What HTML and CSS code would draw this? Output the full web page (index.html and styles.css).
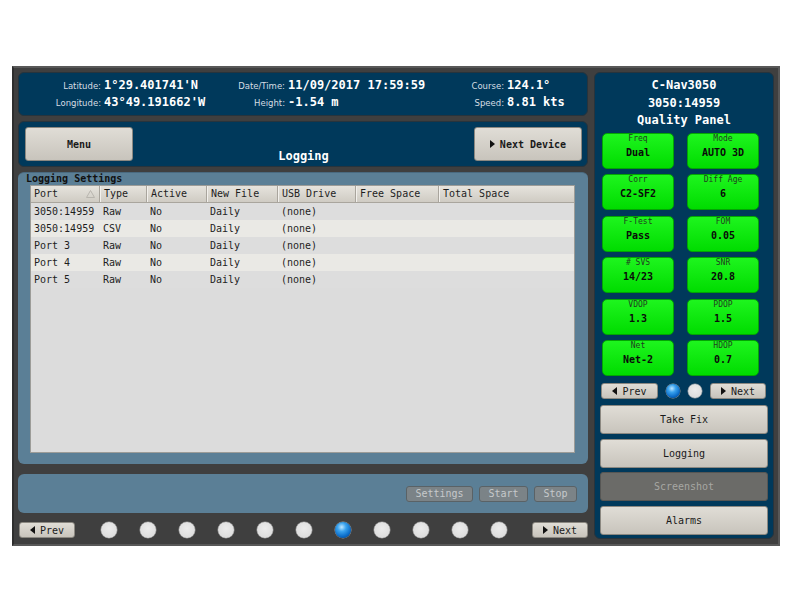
FILE: index.html
```html
<!DOCTYPE html>
<html>
<head>
<meta charset="utf-8">
<link rel="stylesheet" href="styles.css">
</head>
<body>
<div class="frame">
  <div class="left">
    <div class="panel header">
      <div class="hgrid">
        <span class="lbl">Latitude:</span><span class="val">1°29.401741'N</span>
        <span class="lbl">Date/Time:</span><span class="val">11/09/2017 17:59:59</span>
        <span class="lbl">Course:</span><span class="val">124.1°</span>
        <span class="lbl">Longitude:</span><span class="val">43°49.191662'W</span>
        <span class="lbl">Height:</span><span class="val">-1.54 m</span>
        <span class="lbl">Speed:</span><span class="val">8.81 kts</span>
      </div>
    </div>
    <div class="panel titlebar">
      <div class="btn big bold">Menu</div>
      <div class="title">Logging</div>
      <div class="btn big bold"><span class="tri-r"></span>Next Device</div>
    </div>
    <div class="group">
      <div class="legend">Logging Settings</div>
      <div class="table">
        <div class="row head">
          <div class="cell c1">Port<svg class="sort" width="9" height="8" viewBox="0 0 9 8"><path d="M4.5 0.5 L8.5 7.5 L0.5 7.5 Z" fill="none" stroke="#b8b5ae" stroke-width="1"/></svg></div>
          <div class="cell c2">Type</div>
          <div class="cell c3">Active</div>
          <div class="cell c4">New File</div>
          <div class="cell c5">USB Drive</div>
          <div class="cell c6">Free Space</div>
          <div class="cell c7">Total Space</div>
        </div>
        <div class="row odd"><div class="cell c1">3050:14959</div><div class="cell c2">Raw</div><div class="cell c3">No</div><div class="cell c4">Daily</div><div class="cell c5">(none)</div><div class="cell c6"></div><div class="cell c7"></div></div>
        <div class="row even"><div class="cell c1">3050:14959</div><div class="cell c2">CSV</div><div class="cell c3">No</div><div class="cell c4">Daily</div><div class="cell c5">(none)</div><div class="cell c6"></div><div class="cell c7"></div></div>
        <div class="row odd"><div class="cell c1">Port 3</div><div class="cell c2">Raw</div><div class="cell c3">No</div><div class="cell c4">Daily</div><div class="cell c5">(none)</div><div class="cell c6"></div><div class="cell c7"></div></div>
        <div class="row even"><div class="cell c1">Port 4</div><div class="cell c2">Raw</div><div class="cell c3">No</div><div class="cell c4">Daily</div><div class="cell c5">(none)</div><div class="cell c6"></div><div class="cell c7"></div></div>
        <div class="row odd"><div class="cell c1">Port 5</div><div class="cell c2">Raw</div><div class="cell c3">No</div><div class="cell c4">Daily</div><div class="cell c5">(none)</div><div class="cell c6"></div><div class="cell c7"></div></div>
      </div>
    </div>
    <div class="actions">
      <div class="dbtn w-settings">Settings</div>
      <div class="dbtn w-start">Start</div>
      <div class="dbtn w-stop">Stop</div>
    </div>
    <div class="nav">
      <div class="btn small prev"><span class="tri-l"></span>Prev</div>
      <div class="dots">
        <span class="dot"></span><span class="dot"></span><span class="dot"></span><span class="dot"></span><span class="dot"></span><span class="dot"></span>
        <span class="dot on"></span>
        <span class="dot"></span><span class="dot"></span><span class="dot"></span><span class="dot"></span>
      </div>
      <div class="btn small next"><span class="tri-r"></span>Next</div>
    </div>
  </div>
  <div class="side">
    <div class="stitle">C-Nav3050<br>3050:14959<br>Quality Panel</div>
    <div class="tiles">
      <div class="tile"><div class="tl">Freq</div><div class="tv">Dual</div></div>
      <div class="tile"><div class="tl">Mode</div><div class="tv">AUTO 3D</div></div>
      <div class="tile"><div class="tl">Corr</div><div class="tv">C2-SF2</div></div>
      <div class="tile"><div class="tl">Diff Age</div><div class="tv">6</div></div>
      <div class="tile"><div class="tl">F-Test</div><div class="tv">Pass</div></div>
      <div class="tile"><div class="tl">FOM</div><div class="tv">0.05</div></div>
      <div class="tile"><div class="tl"># SVS</div><div class="tv">14/23</div></div>
      <div class="tile"><div class="tl">SNR</div><div class="tv">20.8</div></div>
      <div class="tile"><div class="tl">VDOP</div><div class="tv">1.3</div></div>
      <div class="tile"><div class="tl">PDOP</div><div class="tv">1.5</div></div>
      <div class="tile"><div class="tl">Net</div><div class="tv">Net-2</div></div>
      <div class="tile"><div class="tl">HDOP</div><div class="tv">0.7</div></div>
    </div>
    <div class="snav">
      <div class="btn small sprev"><span class="tri-l"></span>Prev</div>
      <span class="dot sd on"></span>
      <span class="dot sd"></span>
      <div class="btn small snext"><span class="tri-r"></span>Next</div>
    </div>
    <div class="sbtns">
      <div class="btn wide">Take Fix</div>
      <div class="btn wide">Logging</div>
      <div class="btn wide disabled">Screenshot</div>
      <div class="btn wide">Alarms</div>
    </div>
  </div>
</div>
</body>
</html>
```

FILE: styles.css
```css
* { box-sizing: border-box; }
body {
  margin: 0;
  background: #ffffff;
  font-family: "DejaVu Sans Mono", "Liberation Mono", monospace;
}
.frame {
  margin: 66px 0 0 12px;
  width: 768px;
  height: 480px;
  background: #3f3f3f;
  border: 2px solid #585858;
  border-left-color: #2e2e2e;
  padding: 4px 4px 5px 4px;
  display: flex;
  gap: 6px;
  align-items: flex-start;
}
.left {
  width: 570px;
  display: flex;
  flex-direction: column;
}
.panel {
  background: #00395b;
  border: 1px solid #27343d;
  border-radius: 6px;
}
.header {
  height: 44px;
  padding-top: 4px;
}
.hgrid {
  display: grid;
  grid-template-columns: 85px 132px 52px 170px 49px 80px;
  grid-auto-rows: 17px;
  align-items: baseline;
}
.lbl {
  font-family: "DejaVu Sans", sans-serif;
  font-size: 8.5px;
  color: #d6dde3;
  text-align: right;
  padding-right: 3px;
}
.val {
  font-weight: bold;
  font-size: 12px;
  color: #ffffff;
  white-space: nowrap;
  line-height: 17px;
}
.titlebar {
  margin-top: 5px;
  height: 46px;
  padding: 5px 5px 0 6px;
  display: flex;
  justify-content: space-between;
  align-items: flex-start;
}
.title {
  align-self: flex-end;
  color: #fff;
  font-weight: bold;
  font-size: 12px;
  line-height: 14px;
  margin-bottom: 3px;
}
.btn {
  background: linear-gradient(#e0ddd6, #c8c4bc);
  border: 1px solid #8b8881;
  border-radius: 3px;
  color: #1a1a1a;
  font-size: 10px;
  display: flex;
  align-items: center;
  justify-content: center;
}
.bold { font-weight: bold; }
.big { width: 108px; height: 34px; }
.tri-r, .tri-l {
  display: inline-block;
  width: 0; height: 0;
  border-top: 4.5px solid transparent;
  border-bottom: 4.5px solid transparent;
  margin-right: 5px;
}
.tri-r { border-left: 5px solid #111; }
.tri-l { border-right: 5px solid #111; }
.group {
  margin-top: 5px;
  height: 292px;
  background: #5b7f96;
  border-radius: 6px;
  border-top: 1px solid #4a6a80;
  padding: 0 11px 0 12px;
}
.legend {
  font-weight: bold;
  font-size: 10px;
  line-height: 12px;
  color: #111;
  margin-left: -4px;
}
.table {
  background: #dcdcdc;
  border: 1px solid #9c9c98;
  height: 268px;
  width: 545px;
}
.row {
  display: flex;
  height: 17px;
  line-height: 17px;
  font-size: 10px;
  color: #1e1e1e;
}
.row.head {
  background: linear-gradient(#e6e3dd, #cfcbc3);
  border-bottom: 1px solid #a9a59d;
  height: 17px;
  line-height: 15px;
}
.row.odd { background: #dddddd; }
.row.even { background: #eae9e5; }
.cell {
  padding-left: 3px;
  white-space: nowrap;
  overflow: hidden;
  position: relative;
}
.head .cell {
  border-right: 1px solid #a9a59d;
  border-left: 1px solid #f2f0ec;
}
.head .cell.c1 { border-left: none; }
.head .cell.c7 { border-right: none; }
.c1 { width: 69px; }
.c2 { width: 47px; }
.c3 { width: 60px; }
.c4 { width: 71px; }
.c5 { width: 78px; }
.c6 { width: 83px; }
.c7 { flex: 1; }
.sort {
  position: absolute;
  right: 4px;
  top: 4px;
}
.actions {
  margin-top: 10px;
  height: 39px;
  background: #5b7f96;
  border-radius: 6px;
  display: flex;
  justify-content: flex-end;
  align-items: flex-start;
  gap: 6px;
  padding: 12px 11px 0 0;
}
.dbtn {
  height: 16px;
  background: #7b8387;
  border: 1px solid #5a6266;
  border-radius: 3px;
  color: #c6c9cb;
  font-size: 10px;
  line-height: 14px;
  text-align: center;
}
.w-settings { width: 67px; }
.w-start { width: 49px; }
.w-stop { width: 43px; }
.nav {
  margin-top: 9px;
  height: 16px;
  display: flex;
  align-items: center;
}
.small { height: 16px; width: 56px; }
.prev { margin-left: 1px; }
.dots {
  flex: 1;
  display: flex;
  justify-content: center;
  gap: 23px;
}
.dot {
  width: 16px;
  height: 16px;
  border-radius: 50%;
  background: radial-gradient(circle at 50% 40%, #ececec, #d8d8d8);
  box-shadow: 0 0 0 0.5px #9a9a9a;
  display: inline-block;
}
.dot.on {
  background: radial-gradient(circle at 42% 32%, #bfe6ff 0, #3aa3ee 30%, #0b6cc8 65%, #063c78 100%);
}
.side {
  width: 180px;
  height: 467px;
  background: #00395b;
  border: 1px solid #27343d;
  border-radius: 6px;
  padding: 4px 0 0 7px;
}
.stitle {
  color: #fff;
  font-weight: bold;
  font-size: 12px;
  line-height: 17.5px;
  text-align: center;
  padding-right: 7px;
  margin-bottom: 3px;
}
.tiles {
  display: grid;
  grid-template-columns: 72px 72px;
  column-gap: 13px;
  row-gap: 5.6px;
}
.tile {
  height: 36px;
  background: linear-gradient(#1ef51e, #00dc00);
  border: 1px solid #02a602;
  border-radius: 5px;
  text-align: center;
}
.tl {
  font-size: 8px;
  line-height: 10px;
  color: #203c20;
}
.tv {
  font-size: 10px;
  font-weight: bold;
  line-height: 14px;
  margin-top: 2px;
  color: #0a0a0a;
}
.snav {
  margin-top: 7px;
  height: 16px;
  display: flex;
  align-items: center;
  gap: 8px;
}
.sprev { width: 57px; margin-left: -1px; }
.snext { width: 56px; }
.sd { width: 14px; height: 14px; }
.sbtns {
  margin-top: 6px;
  margin-left: -2px;
  width: 168px;
  display: flex;
  flex-direction: column;
  gap: 4.5px;
}
.wide { height: 29px; }
.disabled {
  background: #6b6b68;
  border-color: #565654;
  color: #a7a7a3;
}
```
